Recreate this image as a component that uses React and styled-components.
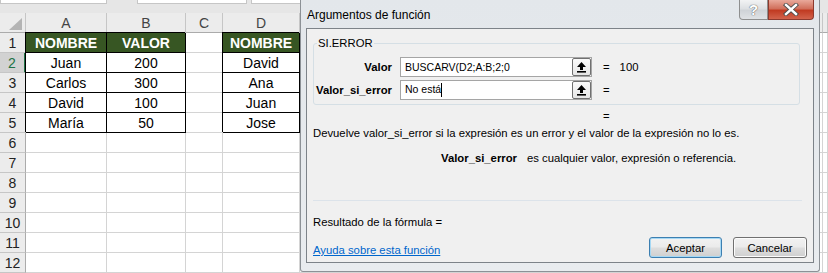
import React from 'react';
import styled, { createGlobalStyle } from 'styled-components';

const GlobalStyle = createGlobalStyle`
    html, body {
        margin: 0;
        padding: 0;
        background: #ffffff;
    }
    * {
        box-sizing: border-box;
    }
`;

const Screen = styled.div`
    position: relative;
    width: 828px;
    height: 273px;
    overflow: hidden;
    background: #ffffff;
    font-family: 'Liberation Sans', Arial, sans-serif;
`;

// ---------- sheet ----------

const TopStrip = styled.div`
    height: 13px;
    background: #e6e6e6;
    display: flex;
    align-items: flex-start;
`;

const StripBox = styled.div`
    height: 4px;
    width: ${props => props.w}px;
    margin-left: ${props => props.ml || 0}px;
    background: #ffffff;
    border: 1px solid #c6c6c6;
    border-top: none;
`;

const Sheet = styled.div`
    display: grid;
    grid-template-columns: 26px 81px 79px 37px 77px 523px 1fr;
    grid-auto-rows: 20px;
`;

const Cell = styled.div`
    display: flex;
    align-items: center;
    justify-content: center;
    border-right: 1px solid ${props => (props.boxed ? '#000000' : '#d4d4d4')};
    border-bottom: 1px solid ${props => (props.boxed ? '#000000' : '#d4d4d4')};
    box-shadow: ${props => (props.boxed ? '-1px -1px 0 0 #000000' : 'none')};
    background: ${props => (props.head ? '#375623' : '#ffffff')};
    color: ${props => (props.head ? '#ffffff' : '#000000')};
    font-weight: ${props => (props.head ? 'bold' : 'normal')};
    font-size: 14px;
    padding-top: 1px;
`;

const ColHead = styled.div`
    display: flex;
    align-items: center;
    justify-content: center;
    background: #ececec;
    border-right: 1px solid #c6c6c6;
    border-bottom: 1px solid #ababab;
    color: #444444;
    font-size: 14px;
`;

const Corner = styled(ColHead)`
    align-items: flex-end;
    justify-content: flex-end;
    padding: 0 3px 2px 0;
`;

const RowHead = styled.div`
    display: flex;
    align-items: center;
    justify-content: center;
    background: ${props => (props.selected ? '#d2d2d2' : '#ececec')};
    border-right: ${props => (props.selected ? '2px solid #217346' : '1px solid #ababab')};
    border-bottom: 1px solid #c6c6c6;
    color: ${props => (props.selected ? '#217346' : '#222222')};
    font-size: 14px;
    padding-top: 1px;
`;

const tableA = [
    ['Juan', '200'],
    ['Carlos', '300'],
    ['David', '100'],
    ['María', '50'],
];
const tableD = ['David', 'Ana', 'Juan', 'Jose'];

const SheetRows = () => {
    const rows = [];
    rows.push(
        <React.Fragment key='h'>
            <Corner>
                <svg width='13' height='12' viewBox='0 0 13 12'>
                    <polygon points='13,0 13,12 0,12' fill='#b4b4b4' />
                </svg>
            </Corner>
            <ColHead>A</ColHead>
            <ColHead>B</ColHead>
            <ColHead>C</ColHead>
            <ColHead>D</ColHead>
            <ColHead>E</ColHead>
            <ColHead />
        </React.Fragment>
    );
    for (let r = 1; r <= 12; r++) {
        const first = r === 1;
        const data = r >= 2 && r <= 5;
        rows.push(
            <React.Fragment key={r}>
                <RowHead selected={r === 2}>{r}</RowHead>
                <Cell boxed={first || data} head={first}>
                    {first ? 'NOMBRE' : data ? tableA[r - 2][0] : ''}
                </Cell>
                <Cell boxed={first || data} head={first}>
                    {first ? 'VALOR' : data ? tableA[r - 2][1] : ''}
                </Cell>
                <Cell />
                <Cell boxed={first || data} head={first}>
                    {first ? 'NOMBRE' : data ? tableD[r - 2] : ''}
                </Cell>
                <Cell />
                <Cell />
            </React.Fragment>
        );
    }
    return rows;
};

// ---------- dialog ----------

const Window = styled.div`
    position: absolute;
    left: 300px;
    top: 0;
    width: 520px;
    height: 272px;
    display: flex;
    flex-direction: column;
    background: linear-gradient(#e3e7eb, #e9ecef);
    border: 1px solid #8c9196;
    border-top: none;
    border-radius: 0 0 3px 3px;
    font-family: 'Liberation Sans', Arial, sans-serif;
    font-size: 11.3px;
    color: #000000;
`;

const TitleBar = styled.div`
    height: 28px;
    display: flex;
    align-items: flex-start;
    padding-left: 6px;
`;

const Title = styled.div`
    flex: 1;
    padding-top: 8px;
    font-size: 12px;
`;

const CaptionButton = styled.div`
    height: 20px;
    width: ${props => props.w}px;
    display: flex;
    align-items: center;
    justify-content: center;
    border: 1px solid ${props => (props.close ? '#8d3a2e' : '#8e8f8f')};
    border-top: none;
    border-radius: ${props => (props.close ? '0 0 4px 0' : '0 0 0 4px')};
    background: ${props => (props.close
        ? 'linear-gradient(#e9a99b, #d1705c 45%, #c13b22 55%, #d2634c)'
        : 'linear-gradient(#f2f3f4, #dde0e3 45%, #cfd3d7 55%, #dfe2e5)')};
    margin-right: ${props => (props.close ? '5px' : '0')};
    color: #ffffff;
    font-size: 15px;
    font-weight: bold;
    text-shadow: 0 0 1px #5a5a5a, 0 0 1px #5a5a5a;
`;

const Content = styled.div`
    flex: 1;
    margin: 0 5px 8px 5px;
    background: #f0f0f0;
    border: 1px solid #7d8389;
    display: flex;
    flex-direction: column;
    padding: 0 6px;
`;

const Group = styled.fieldset`
    margin: 7px 7px 0 0;
    padding: 7px 0 4px 0;
    border: 1px solid #d5dfe5;
    border-radius: 3px;
    display: flex;
    flex-direction: column;
    gap: 3px;
`;

const Legend = styled.legend`
    margin-left: 3px;
    padding: 0 1px;
    line-height: 14px;
`;

const ArgRow = styled.div`
    display: flex;
    align-items: center;
    height: 20px;
`;

const ArgLabel = styled.div`
    width: 78px;
    text-align: right;
    font-weight: bold;
    margin-right: 8px;
`;

const ArgInput = styled.div`
    width: 192px;
    height: 20px;
    display: flex;
    align-items: center;
    background: #ffffff;
    border: 1px solid #a5a5a5;
    padding-left: 4px;
`;

const ArgText = styled.div`
    flex: 1;
    white-space: nowrap;
    font-size: 10.5px;
`;

const Caret = styled.span`
    display: inline-block;
    width: 1px;
    height: 14px;
    background: #000000;
    vertical-align: middle;
`;

const RefButton = styled.div`
    width: 19px;
    height: 18px;
    display: flex;
    align-items: center;
    justify-content: center;
    border: 1px solid #707070;
    border-radius: 2px;
    background: linear-gradient(#fafafa, #e6e6e6);
`;

const ArgResult = styled.div`
    margin-left: 11px;
    display: flex;
    gap: 10px;
`;

const CenterEq = styled.div`
    margin-top: 4px;
    padding-left: 290px;
    line-height: 14px;
`;

const Description = styled.div`
    margin-top: 3px;
    line-height: 14px;
`;

const ArgHelp = styled.div`
    margin-top: 11px;
    padding-left: 128px;
    line-height: 14px;
    display: flex;
    gap: 10px;
`;

const Bold = styled.span`
    font-weight: bold;
`;

const Separator = styled.div`
    margin: 35px 5px 0 0;
    height: 1px;
    background: #dce3ea;
`;

const ResultLine = styled.div`
    margin-top: 14px;
    line-height: 14px;
`;

const Footer = styled.div`
    margin-top: 8px;
    display: flex;
    align-items: flex-end;
    gap: 11px;
`;

const HelpLink = styled.a`
    flex: 1;
    color: #0066cc;
    text-decoration: underline;
    line-height: 14px;
    margin-bottom: 1px;
`;

const DialogButton = styled.div`
    width: ${props => props.w}px;
    height: 21px;
    display: flex;
    align-items: center;
    justify-content: center;
    border: 1px solid ${props => (props.primary ? '#3c7fb1' : '#707070')};
    border-radius: 3px;
    background: linear-gradient(#f2f2f2 0%, #ebebeb 45%, #dddddd 55%, #cfcfcf 100%);
    box-shadow: ${props => (props.primary ? 'inset 0 0 0 1px #a6d8f4' : 'inset 0 0 0 1px #fcfcfc')};
`;

const RefIcon = () => (
    <svg width='11' height='12' viewBox='0 0 11 12'>
        <path d='M5.5 1 L1 6 H4 V9 H7 V6 H10 Z' fill='#000000' />
        <rect x='1' y='10' width='9' height='1.6' fill='#000000' />
    </svg>
);

const CloseGlyph = () => (
    <svg width='16' height='13' viewBox='0 0 16 13'>
        <path d='M3 2 L13 11 M13 2 L3 11' stroke='#4b4b4b' strokeWidth='4.2' strokeLinecap='square' />
        <path d='M3 2 L13 11 M13 2 L3 11' stroke='#ffffff' strokeWidth='2.4' strokeLinecap='square' />
    </svg>
);

const App = () => {
    return (
        <Screen>
            <GlobalStyle />
            <TopStrip>
                <StripBox w={107} />
                <StripBox w={110} ml={30} />
                <StripBox w={300} ml={4} />
            </TopStrip>
            <Sheet>
                <SheetRows />
            </Sheet>

            <Window>
                <TitleBar>
                    <Title>Argumentos de función</Title>
                    <CaptionButton w={29}>?</CaptionButton>
                    <CaptionButton w={46} close><CloseGlyph /></CaptionButton>
                </TitleBar>
                <Content>
                    <Group>
                        <Legend>SI.ERROR</Legend>
                        <ArgRow>
                            <ArgLabel>Valor</ArgLabel>
                            <ArgInput>
                                <ArgText>BUSCARV(D2;A:B;2;0</ArgText>
                                <RefButton><RefIcon /></RefButton>
                            </ArgInput>
                            <ArgResult><span>=</span><span>100</span></ArgResult>
                        </ArgRow>
                        <ArgRow>
                            <ArgLabel>Valor_si_error</ArgLabel>
                            <ArgInput>
                                <ArgText>No está<Caret /></ArgText>
                                <RefButton><RefIcon /></RefButton>
                            </ArgInput>
                            <ArgResult><span>=</span></ArgResult>
                        </ArgRow>
                    </Group>
                    <CenterEq>=</CenterEq>
                    <Description>
                        Devuelve valor_si_error si la expresión es un error y el valor de la expresión no lo es.
                    </Description>
                    <ArgHelp>
                        <Bold>Valor_si_error</Bold>
                        <span>es cualquier valor, expresión o referencia.</span>
                    </ArgHelp>
                    <Separator />
                    <ResultLine>Resultado de la fórmula =</ResultLine>
                    <Footer>
                        <HelpLink>Ayuda sobre esta función</HelpLink>
                        <DialogButton w={73} primary>Aceptar</DialogButton>
                        <DialogButton w={74}>Cancelar</DialogButton>
                    </Footer>
                </Content>
            </Window>
        </Screen>
    );
};

export default App;
